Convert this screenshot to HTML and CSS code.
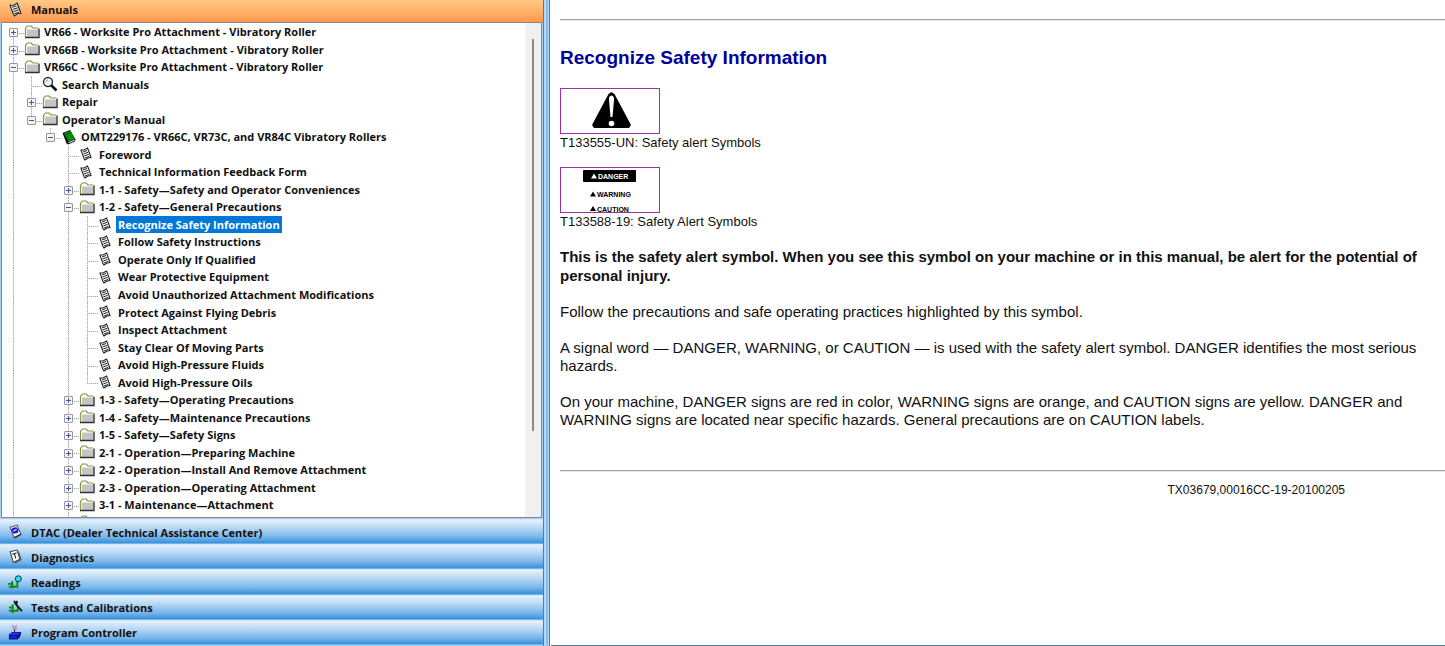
FILE: index.html
```html
<!DOCTYPE html>
<html lang="en">
<head>
<meta charset="utf-8">
<title>Recognize Safety Information</title>
<link rel="stylesheet" href="styles.css">
</head>
<body>
<svg class="sprite" aria-hidden="true">
  <symbol id="folder" viewBox="0 0 16 16">
    <path d="M1.500 13V4.500L3.500 2H7L9 4H14V13Z" fill="#fff"/>
    <path d="M1.500 13V4.500L3.500 2H7L9 4H14" fill="none" stroke="#90903c" stroke-width="1.200"/>
    <path d="M3 5.500H14V13H3Z" fill="#c4c4c4"/>
    <path d="M1 13.500H15V4.500" fill="none" stroke="#303030" stroke-width="1.400"/>
  </symbol>
  <symbol id="doc" viewBox="0 0 14 14">
    <path d="M2 3L8 1L12 10.500L6 13L4.500 12Z" fill="#fff"/>
    <path d="M3 6L2 3L5 3L8.500 1L9.500 3.500L12 10.500L9 11L6 13L5 11.500L3 6" fill="none" stroke="#222" stroke-width="1.100"/>
    <path d="M4 5L8 3.500M4.500 7L9 5.300M5.200 9L9.700 7.300M6 11L10.400 9.300" stroke="#222"/>
  </symbol>
  <symbol id="search" viewBox="0 0 16 16">
    <circle cx="6" cy="6" r="4.500" fill="#f0f0f0" stroke="#333" stroke-width="1.400"/>
    <path d="M9 9L14.500 14.500" stroke="#111" stroke-width="2.600"/>
    <path d="M3.800 6Q4 3.900 6 3.800" fill="none" stroke="#999"/>
  </symbol>
  <symbol id="book" viewBox="0 0 16 16">
    <path d="M1.500 4L9 1L14.500 10.500L14 12.500L7 15.500L5.500 14.500Z" fill="#111"/>
    <path d="M3 4.200L9.500 1.500L14 10L7.500 12.500Z" fill="#078a12"/>
    <path d="M7.500 13.700L13.500 11.300" stroke="#fff"/>
    <path d="M5.500 5.200L9.500 3.500" stroke="#044c08"/>
  </symbol>
  <symbol id="dtac" viewBox="0 0 14 14">
    <path d="M2 3L8.500 1L12 9.500L5.500 12.500Z" fill="#fff" stroke="#555"/>
    <path d="M3 5.500Q4 2.500 8 3L10 5.500L9 8.500L5 9Z" fill="#1c1cd8"/>
    <path d="M5 6.500L8 5.200" stroke="#fff"/>
    <path d="M12.300 9.500L6 13" stroke="#222"/>
  </symbol>
  <symbol id="diag" viewBox="0 0 14 14">
    <path d="M2 2.500L8.500 1L11 9.500L5 12.500Z" fill="#fff" stroke="#444"/>
    <path d="M4 5L8 3.800M6 4.500L7.300 8.800" stroke="#222"/>
    <path d="M9.800 2.500L12.200 10L6.500 13" fill="none" stroke="#555"/>
  </symbol>
  <symbol id="readings" viewBox="0 0 16 16">
    <path d="M4.500 6.500V14M0 9.500H4.500M1 12.500H10V7" fill="none" stroke="#0a8a18" stroke-width="2"/>
    <circle cx="11" cy="4" r="3.200" fill="#18e0f0" stroke="#124"/>
  </symbol>
  <symbol id="tests" viewBox="0 0 16 16">
    <path d="M5 4.500V14M1 8H5M1 11.500H10.500V7" fill="none" stroke="#0a8a18" stroke-width="2"/>
    <path d="M6.500 1L8 4L15 12M9.500 1L9 5" fill="none" stroke="#111" stroke-width="2"/>
  </symbol>
  <symbol id="program" viewBox="0 0 16 16">
    <path d="M4.500 .5L7 2.500L9.500 .5M4.500 3L7 5L9.500 3" fill="none" stroke="#b04058"/>
    <path d="M7 5V9" stroke="#111"/>
    <path d="M1 10L4.500 7.500H14L13 12.500L10 15.500H1Z" fill="#0a0a70"/>
    <path d="M1.500 10.500L5 8H13.500L10.500 11H1.500Z" fill="#2233e8"/>
    <path d="M2 13H9.500" stroke="#1a22d8" stroke-width="3"/>
  </symbol>
</svg>

<div class="app">
  <aside class="side">
    <button class="bar bar-active" type="button"><svg class="bar-icon"><use href="#doc"/></svg>Manuals</button>
    <div class="tree-box">
      <ul class="tree">
        <li class="row"><span class="node"><button class="toggle plus" aria-label="Expand"></button></span><svg class="icon"><use href="#folder"/></svg><span class="label">VR66 - Worksite Pro Attachment - Vibratory Roller</span></li>
        <li class="row"><span class="node"><button class="toggle plus" aria-label="Expand"></button></span><svg class="icon"><use href="#folder"/></svg><span class="label">VR66B - Worksite Pro Attachment - Vibratory Roller</span></li>
        <li class="row"><span class="node"><button class="toggle" aria-label="Collapse"></button></span><svg class="icon"><use href="#folder"/></svg><span class="label">VR66C - Worksite Pro Attachment - Vibratory Roller</span></li>
        <li class="row"><i class="guide line"></i><span class="node"></span><svg class="icon"><use href="#search"/></svg><span class="label">Search Manuals</span></li>
        <li class="row"><i class="guide line"></i><span class="node"><button class="toggle plus" aria-label="Expand"></button></span><svg class="icon"><use href="#folder"/></svg><span class="label">Repair</span></li>
        <li class="row"><i class="guide line"></i><span class="node last"><button class="toggle" aria-label="Collapse"></button></span><svg class="icon"><use href="#folder"/></svg><span class="label">Operator's Manual</span></li>
        <li class="row"><i class="guide line"></i><i class="guide"></i><span class="node last"><button class="toggle" aria-label="Collapse"></button></span><svg class="icon"><use href="#book"/></svg><span class="label">OMT229176 - VR66C, VR73C, and VR84C Vibratory Rollers</span></li>
        <li class="row"><i class="guide line"></i><i class="guide"></i><i class="guide"></i><span class="node"></span><svg class="icon doc"><use href="#doc"/></svg><span class="label">Foreword</span></li>
        <li class="row"><i class="guide line"></i><i class="guide"></i><i class="guide"></i><span class="node"></span><svg class="icon doc"><use href="#doc"/></svg><span class="label">Technical Information Feedback Form</span></li>
        <li class="row"><i class="guide line"></i><i class="guide"></i><i class="guide"></i><span class="node"><button class="toggle plus" aria-label="Expand"></button></span><svg class="icon"><use href="#folder"/></svg><span class="label">1-1 - Safety—Safety and Operator Conveniences</span></li>
        <li class="row"><i class="guide line"></i><i class="guide"></i><i class="guide"></i><span class="node"><button class="toggle" aria-label="Collapse"></button></span><svg class="icon"><use href="#folder"/></svg><span class="label">1-2 - Safety—General Precautions</span></li>
        <li class="row"><i class="guide line"></i><i class="guide"></i><i class="guide"></i><i class="guide line"></i><span class="node"></span><svg class="icon doc"><use href="#doc"/></svg><span class="label selected">Recognize Safety Information</span></li>
        <li class="row"><i class="guide line"></i><i class="guide"></i><i class="guide"></i><i class="guide line"></i><span class="node"></span><svg class="icon doc"><use href="#doc"/></svg><span class="label">Follow Safety Instructions</span></li>
        <li class="row"><i class="guide line"></i><i class="guide"></i><i class="guide"></i><i class="guide line"></i><span class="node"></span><svg class="icon doc"><use href="#doc"/></svg><span class="label">Operate Only If Qualified</span></li>
        <li class="row"><i class="guide line"></i><i class="guide"></i><i class="guide"></i><i class="guide line"></i><span class="node"></span><svg class="icon doc"><use href="#doc"/></svg><span class="label">Wear Protective Equipment</span></li>
        <li class="row"><i class="guide line"></i><i class="guide"></i><i class="guide"></i><i class="guide line"></i><span class="node"></span><svg class="icon doc"><use href="#doc"/></svg><span class="label">Avoid Unauthorized Attachment Modifications</span></li>
        <li class="row"><i class="guide line"></i><i class="guide"></i><i class="guide"></i><i class="guide line"></i><span class="node"></span><svg class="icon doc"><use href="#doc"/></svg><span class="label">Protect Against Flying Debris</span></li>
        <li class="row"><i class="guide line"></i><i class="guide"></i><i class="guide"></i><i class="guide line"></i><span class="node"></span><svg class="icon doc"><use href="#doc"/></svg><span class="label">Inspect Attachment</span></li>
        <li class="row"><i class="guide line"></i><i class="guide"></i><i class="guide"></i><i class="guide line"></i><span class="node"></span><svg class="icon doc"><use href="#doc"/></svg><span class="label">Stay Clear Of Moving Parts</span></li>
        <li class="row"><i class="guide line"></i><i class="guide"></i><i class="guide"></i><i class="guide line"></i><span class="node"></span><svg class="icon doc"><use href="#doc"/></svg><span class="label">Avoid High-Pressure Fluids</span></li>
        <li class="row"><i class="guide line"></i><i class="guide"></i><i class="guide"></i><i class="guide line"></i><span class="node last"></span><svg class="icon doc"><use href="#doc"/></svg><span class="label">Avoid High-Pressure Oils</span></li>
        <li class="row"><i class="guide line"></i><i class="guide"></i><i class="guide"></i><span class="node"><button class="toggle plus" aria-label="Expand"></button></span><svg class="icon"><use href="#folder"/></svg><span class="label">1-3 - Safety—Operating Precautions</span></li>
        <li class="row"><i class="guide line"></i><i class="guide"></i><i class="guide"></i><span class="node"><button class="toggle plus" aria-label="Expand"></button></span><svg class="icon"><use href="#folder"/></svg><span class="label">1-4 - Safety—Maintenance Precautions</span></li>
        <li class="row"><i class="guide line"></i><i class="guide"></i><i class="guide"></i><span class="node"><button class="toggle plus" aria-label="Expand"></button></span><svg class="icon"><use href="#folder"/></svg><span class="label">1-5 - Safety—Safety Signs</span></li>
        <li class="row"><i class="guide line"></i><i class="guide"></i><i class="guide"></i><span class="node"><button class="toggle plus" aria-label="Expand"></button></span><svg class="icon"><use href="#folder"/></svg><span class="label">2-1 - Operation—Preparing Machine</span></li>
        <li class="row"><i class="guide line"></i><i class="guide"></i><i class="guide"></i><span class="node"><button class="toggle plus" aria-label="Expand"></button></span><svg class="icon"><use href="#folder"/></svg><span class="label">2-2 - Operation—Install And Remove Attachment</span></li>
        <li class="row"><i class="guide line"></i><i class="guide"></i><i class="guide"></i><span class="node"><button class="toggle plus" aria-label="Expand"></button></span><svg class="icon"><use href="#folder"/></svg><span class="label">2-3 - Operation—Operating Attachment</span></li>
        <li class="row"><i class="guide line"></i><i class="guide"></i><i class="guide"></i><span class="node"><button class="toggle plus" aria-label="Expand"></button></span><svg class="icon"><use href="#folder"/></svg><span class="label">3-1 - Maintenance—Attachment</span></li>
        <li class="row"><i class="guide line"></i><i class="guide"></i><i class="guide"></i><span class="node"></span><svg class="icon"><use href="#folder"/></svg></li>
      </ul>
      <div class="scroll"><div class="thumb"></div></div>
    </div>
    <nav class="bars">
      <button class="bar" type="button"><svg class="bar-icon"><use href="#dtac"/></svg>DTAC (Dealer Technical Assistance Center)</button>
      <button class="bar" type="button"><svg class="bar-icon"><use href="#diag"/></svg>Diagnostics</button>
      <button class="bar" type="button"><svg class="bar-icon"><use href="#readings"/></svg>Readings</button>
      <button class="bar" type="button"><svg class="bar-icon"><use href="#tests"/></svg>Tests and Calibrations</button>
      <button class="bar" type="button"><svg class="bar-icon"><use href="#program"/></svg>Program Controller</button>
    </nav>
  </aside>
  <div class="splitter"></div>
  <main class="page">
    <hr>
    <h1>Recognize Safety Information</h1>
    <figure>
      <svg class="picture" viewBox="0 0 98 44" role="img" aria-label="Safety alert symbol">
        <path d="M50.500 3L53.500 5L70 36L68 39H33L31 36L47.500 5Z" fill="#000"/>
        <path d="M50.500 6.500Q53.500 7 53 11L51.500 28H49.500L48 11Q47.500 7 50.500 6.500Z" fill="#fff"/>
        <circle cx="50.500" cy="34.500" r="2.800" fill="#fff"/>
      </svg>
      <figcaption>T133555-UN: Safety alert Symbols</figcaption>
    </figure>
    <figure>
      <svg class="picture" viewBox="0 0 98 44" role="img" aria-label="Danger, warning and caution labels">
        <rect x="22" y="2" width="53" height="12" rx="1" fill="#000"/>
        <path d="M30 10.500L33 5.500L36 10.500Z" fill="#fff"/>
        <text class="sign" x="37" y="11" fill="#fff">DANGER</text>
        <path d="M29 28.500L32 23.500L35 28.500ZM29 43L32 38L35 43Z" fill="#000"/>
        <text class="sign" x="36" y="29">WARNING</text>
        <text class="sign" x="36" y="44">CAUTION</text>
      </svg>
      <figcaption>T133588-19: Safety Alert Symbols</figcaption>
    </figure>
    <p class="lead">This is the safety alert symbol. When you see this symbol on your machine or in this manual, be alert for the potential of personal injury.</p>
    <p>Follow the precautions and safe operating practices highlighted by this symbol.</p>
    <p>A signal word — DANGER, WARNING, or CAUTION — is used with the safety alert symbol. DANGER identifies the most serious hazards.</p>
    <p>On your machine, DANGER signs are red in color, WARNING signs are orange, and CAUTION signs are yellow. DANGER and WARNING signs are located near specific hazards. General precautions are on CAUTION labels.</p>
    <hr class="end">
    <div class="code">TX03679,00016CC-19-20100205</div>
  </main>
</div>
</body>
</html>
```
FILE: styles.css
```css
* { box-sizing: border-box; }

body {
  margin: 0;
  background: #fff;
  color: #111;
  font-family: "Liberation Sans", Arial, sans-serif;
}

.sprite { position: absolute; width: 0; height: 0; }

.app {
  display: grid;
  grid-template-columns: minmax(0, 543fr) 8px minmax(0, 894fr);
  height: 100vh;
}

.side {
  display: flex;
  flex-direction: column;
  min-height: 0;
  padding-bottom: 1px;
  background: #a8d0f4;
}

/* Accordion bars */
.bar {
  display: flex;
  align-items: center;
  gap: 8px;
  width: 100%;
  padding: 1px 8px 0;
  border: 0;
  border-top: 1px solid #d4e8fa;
  background: linear-gradient(#e6f2fc, #b4d6f4 35%, #7ab6ea 70%, #3c94de 94%, #8cc2f0);
  color: #111;
  font: 700 11px/16px "Open Sans", "Segoe UI", sans-serif;
  text-align: left;
}

.bar-active {
  flex: none;
  height: 22px;
  padding-bottom: 4px;
  border: 0;
  background: linear-gradient(#ffca86, #ff9850);
}

.bar-icon { flex: none; width: 15px; height: 15px; }
.bars .bar-icon { margin-bottom: 2px; }

.bars { display: flex; flex: none; flex-direction: column; height: 126px; }
.bars .bar { flex: 1; }

/* Tree */
.tree-box {
  display: flex;
  flex: 1;
  min-height: 0;
  margin: 0 1px 1px;
  border: 1px solid #808890;
  background: #fff;
  overflow: hidden;
}

.tree {
  display: grid;
  grid-auto-rows: 1fr;
  flex: 1;
  height: 508px;
  margin: 0;
  padding: 0 0 0 2px;
  list-style: none;
}

.row { display: flex; align-items: center; min-height: 0; }

.guide { flex: none; align-self: stretch; width: 18px; }
.guide:nth-child(even) { width: 19px; }

.line {
  background: repeating-linear-gradient(#aaa 0 1px, #e4e4e4 1px 2px) 9px 0 / 1px 100% no-repeat;
}

.node {
  display: flex;
  flex: none;
  align-self: stretch;
  align-items: center;
  width: 20px;
  padding: 2px 0 0 5px;
  background:
    repeating-linear-gradient(#aaa 0 1px, #e4e4e4 1px 2px) 9px 0 / 1px 100% no-repeat,
    repeating-linear-gradient(90deg, #aaa 0 1px, #e4e4e4 1px 2px) 9px 10px / 11px 1px no-repeat;
}

.node.last { background-size: 1px 10px, 11px 1px; }

/* The root branch starts at the first item */
.row:first-child .node {
  background-position: 9px 10px;
}

.toggle {
  width: 9px;
  height: 9px;
  padding: 0;
  border: 1px solid #989898;
  border-radius: 1px;
  background: linear-gradient(#3c58b0, #3c58b0) center / 5px 1px no-repeat, #f4f4f4;
}

.toggle.plus {
  background:
    linear-gradient(#3c58b0, #3c58b0) center / 5px 1px no-repeat,
    linear-gradient(#3c58b0, #3c58b0) center / 1px 5px no-repeat,
    #f4f4f4;
}

.icon { flex: none; width: 16px; height: 16px; }
.icon.doc { padding: 1px 2px 1px 0; }

.label {
  margin-left: 2px;
  padding: 0 2px;
  font: 700 11px/17px "Open Sans", "Segoe UI", sans-serif;
  white-space: nowrap;
}

.selected { background: #0078d7; color: #fff; }

.scroll {
  flex: none;
  width: 16px;
  padding: 16px 7px 0;
  background: #f0f0f0;
}

.thumb { height: 82%; background: #8a8a8a; }

.splitter {
  background: linear-gradient(90deg, #4a80b0 0 1px, #b4d8f8 1px 3px, #8cbcec 3px 5px, #b4d8f8 5px 6px, #4a7aa4 6px 7px, #fff 7px);
}

/* Document */
.page {
  min-width: 0;
  padding: 19px 0 0 9px;
  border-bottom: 1px solid #4a7a9c;
  overflow: hidden;
}

hr {
  height: 2px;
  margin: 0;
  border: 0;
  border-top: 1px solid #a0a0a0;
  background: #e8e8e8;
}

h1 {
  margin: 25px 0 18px;
  color: #00009c;
  font-size: 19px;
  line-height: 24px;
}

figure { margin: 0 0 16px; }

.picture {
  display: block;
  width: 100px;
  height: 46px;
  border: 1px solid #a030a0;
}

.sign { font: bold 7px "Liberation Sans", Arial, sans-serif; }

figcaption { font-size: 13px; line-height: 17px; }

p { margin: 0 0 18px; font-size: 15px; line-height: 18px; }

.lead { margin-top: 17px; font-weight: bold; line-height: 19px; }

.end { margin-top: 41px; }

.code {
  margin: 10px 100px 0 0;
  font-size: 12px;
  line-height: 16px;
  text-align: right;
}
```
